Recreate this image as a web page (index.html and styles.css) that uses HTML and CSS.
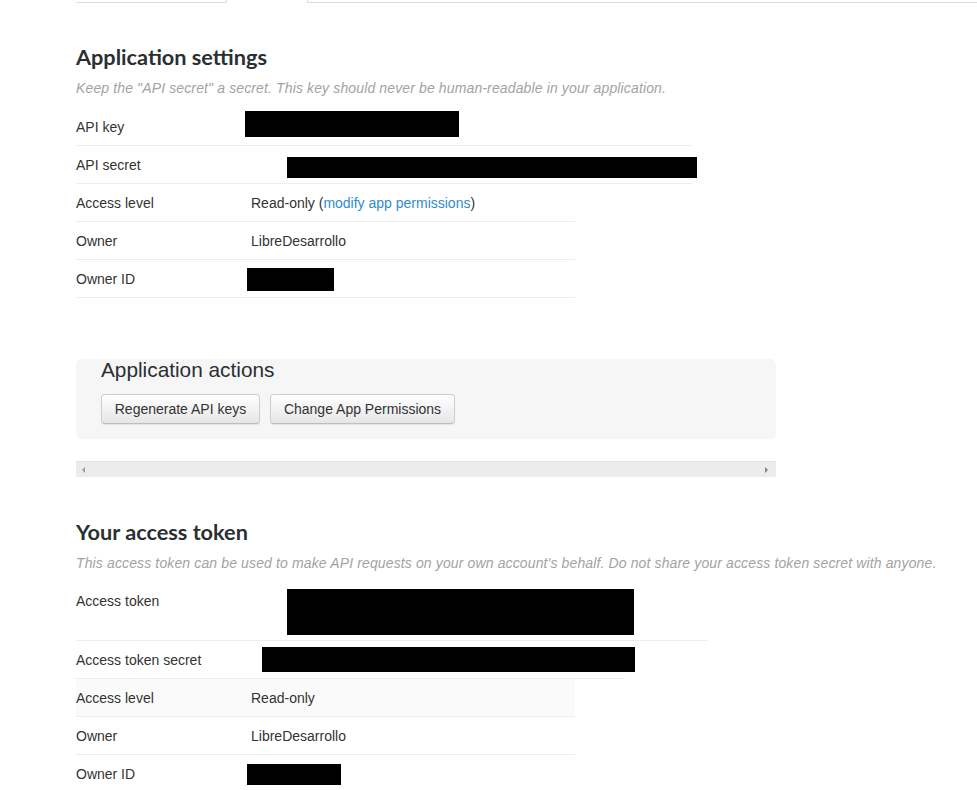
FILE: index.html
```html
<!DOCTYPE html>
<html>
<head>
<meta charset="utf-8">
<title>Application settings</title>
<link rel="stylesheet" href="styles.css">
</head>
<body>
<div class="tabs">
  <div class="tab tab-left"></div>
  <div class="tab tab-active"></div>
  <div class="tab tab-right"></div>
</div>

<main class="page">
  <section class="settings">
    <h2 class="section-title">Application settings</h2>
    <p class="section-note">Keep the "API secret" a secret. This key should never be human-readable in your application.</p>
    <div class="table">
      <div class="row row-w616">
        <div class="label">API key</div>
        <div class="value"><span class="redact r-apikey"></span></div>
      </div>
      <div class="row row-w616">
        <div class="label">API secret</div>
        <div class="value"><span class="redact r-apisecret"></span></div>
      </div>
      <div class="row row-w499">
        <div class="label">Access level</div>
        <div class="value">Read-only (<a class="link" href="#">modify app permissions</a>)</div>
      </div>
      <div class="row row-w499">
        <div class="label">Owner</div>
        <div class="value">LibreDesarrollo</div>
      </div>
      <div class="row row-w499">
        <div class="label">Owner ID</div>
        <div class="value"><span class="redact r-ownerid"></span></div>
      </div>
    </div>
  </section>

  <section class="actions">
    <h3 class="actions-title">Application actions</h3>
    <div class="buttons">
      <button class="btn btn-regen">Regenerate API keys</button>
      <button class="btn btn-perm">Change App Permissions</button>
    </div>
  </section>

  <div class="hscroll">
    <span class="arrow arrow-left"></span>
    <span class="arrow arrow-right"></span>
  </div>

  <section class="token">
    <h2 class="section-title">Your access token</h2>
    <p class="section-note">This access token can be used to make API requests on your own account's behalf. Do not share your access token secret with anyone.</p>
    <div class="table table-token">
      <div class="row row-tall row-w632">
        <div class="label">Access token</div>
        <div class="value"><span class="redact r-token"></span></div>
      </div>
      <div class="row row-w549">
        <div class="label">Access token secret</div>
        <div class="value"><span class="redact r-tokensecret"></span></div>
      </div>
      <div class="row row-w499 row-shaded">
        <div class="label">Access level</div>
        <div class="value">Read-only</div>
      </div>
      <div class="row row-w499">
        <div class="label">Owner</div>
        <div class="value">LibreDesarrollo</div>
      </div>
      <div class="row row-w499 row-last">
        <div class="label">Owner ID</div>
        <div class="value"><span class="redact r-ownerid2"></span></div>
      </div>
    </div>
  </section>
</main>
</body>
</html>
```

FILE: styles.css
```css
* { box-sizing: border-box; }

html, body {
  margin: 0;
  padding: 0;
  background: #fff;
}

body {
  font-family: "Liberation Sans", Arial, sans-serif;
  font-size: 14px;
  color: #333;
  overflow: hidden;
}

/* top tabs */
.tabs {
  display: flex;
  padding-left: 76px;
  height: 3px;
}
.tab { height: 3px; }
.tab-left {
  width: 151px;
  border-right: 1px solid #dcdcdc;
  border-bottom: 1px solid #dcdcdc;
}
.tab-active { width: 80px; }
.tab-right {
  flex: 1;
  border-left: 1px solid #dcdcdc;
  border-bottom: 1px solid #dcdcdc;
}

.page {
  padding-left: 76px;
}

.section-title {
  font-family: Lato, "Liberation Sans", sans-serif;
  font-weight: 700;
  font-size: 21.7px;
  line-height: 28px;
  color: #292f33;
  margin: 40px 0 0;
}

.section-note {
  font-style: italic;
  font-size: 14px;
  line-height: 18px;
  letter-spacing: 0.13px;
  color: #a3a3a3;
  margin: 8px 0 11px;
}

.table { display: flex; flex-direction: column; }

.row {
  display: flex;
  align-items: center;
  height: 38px;
  border-bottom: 1px solid #ececec;
  line-height: 20px;
}
.row-last { border-bottom: none; }
.row-w616 { width: 616px; }
.row-w499 { width: 499px; }
.row-w632 { width: 632px; }
.row-w549 { width: 549px; }
.row-shaded { background: #fafafa; }

.label {
  width: 175px;
  flex: none;
}
.value { display: flex; align-items: center; white-space: nowrap; }

.link { color: #2f8bd0; text-decoration: none; }

.redact {
  display: block;
  background: #000;
}
.r-apikey { width: 214px; height: 26px; margin-left: -6px; margin-top: -5px; }
.r-apisecret { width: 410px; height: 21px; margin-left: 36px; margin-top: 5px; }
.r-ownerid { width: 87px; height: 23px; margin-left: -4px; margin-top: 1px; }
.r-token { width: 347px; height: 46px; margin-left: 36px; margin-top: 7px; }
.r-tokensecret { width: 373px; height: 25px; margin-left: 11px; }
.r-ownerid2 { width: 94px; height: 21px; margin-left: -4px; }

.row-tall {
  height: 59px;
  align-items: flex-start;
}
.row-tall .label { padding-top: 9px; }
.row-tall .value { align-items: flex-start; }

.table-token { margin-top: 10px; }

/* actions */
.actions {
  width: 700px;
  margin-top: 61px;
  background: #f6f6f6;
  border-radius: 6px;
  padding: 0 25px 15px;
}
.actions-title {
  font-weight: 400;
  font-size: 20.8px;
  line-height: 22px;
  color: #292f33;
  margin: 0;
}
.buttons {
  display: flex;
  gap: 10px;
  margin-top: 13px;
}
.btn {
  font-family: "Liberation Sans", Arial, sans-serif;
  font-size: 14px;
  color: #333;
  height: 30px;
  padding: 0 12px;
  border: 1px solid #cfcfcf;
  border-bottom-color: #bdbdbd;
  border-radius: 4px;
  background: linear-gradient(#ffffff, #e6e6e6);
  box-shadow: 0 1px 1px rgba(0,0,0,0.08);
}
.btn-regen { width: 159px; }
.btn-perm { width: 185px; }

/* horizontal scrollbar */
.hscroll {
  width: 700px;
  height: 16px;
  margin-top: 22px;
  background: #ececec;
  border-top: 1px solid #e2e2e2;
  display: flex;
  align-items: center;
  justify-content: space-between;
  padding: 0 6px;
}
.arrow {
  width: 0;
  height: 0;
  border-top: 3px solid transparent;
  border-bottom: 3px solid transparent;
}
.arrow-left { border-right: 3px solid #9a9a9a; }
.arrow-right { border-left: 3px solid #8a7f8a; margin-right: 2px; }

.token .section-title { margin-top: 41px; }
.token .section-note { margin-bottom: 0; }
```
